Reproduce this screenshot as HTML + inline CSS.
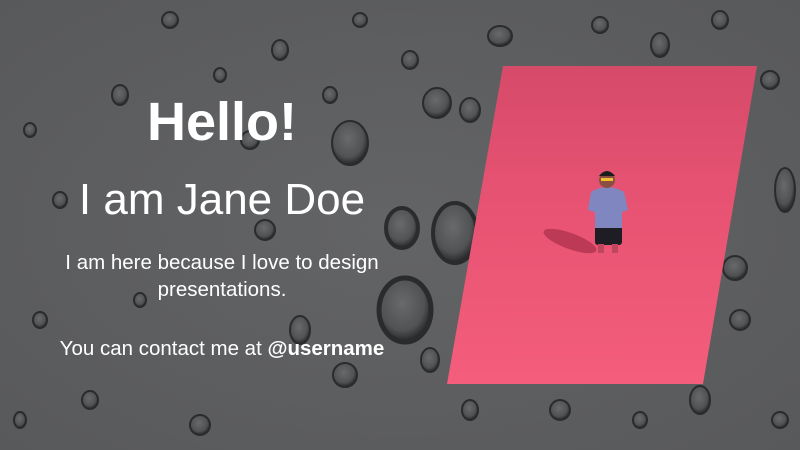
<!DOCTYPE html>
<html><head><meta charset="utf-8"><style>
html,body{margin:0;padding:0}
body{width:800px;height:450px;overflow:hidden;position:relative;background:#5e5f61;font-family:"Liberation Sans",sans-serif;color:#fff}
.t{position:absolute;left:0;width:444px;text-align:center;white-space:nowrap}
</style></head><body>
<svg width="800" height="450" style="position:absolute;left:0;top:0">
<defs>
<radialGradient id="bg" cx="50%" cy="50%" r="70%"><stop offset="0" stop-color="#636466"/><stop offset="1" stop-color="#58595b"/></radialGradient>
<linearGradient id="pk" x1="0" y1="0" x2="0" y2="1"><stop offset="0" stop-color="#d64a6a"/><stop offset="0.5" stop-color="#ea5474"/><stop offset="1" stop-color="#f45e7c"/></linearGradient>
<radialGradient id="dr" cx="45%" cy="40%" r="60%"><stop offset="0" stop-color="#6a6b6d"/><stop offset="0.7" stop-color="#505153"/><stop offset="1" stop-color="#1e1f21"/></radialGradient>
</defs>
<rect width="800" height="450" fill="url(#bg)"/>
<g fill="url(#dr)" stroke="#252628" stroke-width="2" opacity="0.9">
<ellipse cx="437" cy="103" rx="14" ry="15"/><ellipse cx="350" cy="143" rx="18" ry="22"/>
<ellipse cx="402" cy="228" rx="16" ry="20" stroke-width="4"/><ellipse cx="455" cy="233" rx="22" ry="30" stroke-width="4"/>
<ellipse cx="405" cy="310" rx="26" ry="32" stroke-width="5"/><ellipse cx="500" cy="36" rx="12" ry="10"/>
<ellipse cx="470" cy="110" rx="10" ry="12"/><ellipse cx="785" cy="190" rx="10" ry="22"/>
<ellipse cx="740" cy="320" rx="10" ry="10"/><ellipse cx="735" cy="268" rx="12" ry="12"/>
<ellipse cx="700" cy="400" rx="10" ry="14"/><ellipse cx="265" cy="230" rx="10" ry="10"/>
<ellipse cx="345" cy="375" rx="12" ry="12"/><ellipse cx="300" cy="330" rx="10" ry="14"/>
<ellipse cx="200" cy="425" rx="10" ry="10"/><ellipse cx="120" cy="95" rx="8" ry="10"/>
<ellipse cx="60" cy="200" rx="7" ry="8"/><ellipse cx="40" cy="320" rx="7" ry="8"/>
<ellipse cx="660" cy="45" rx="9" ry="12"/><ellipse cx="600" cy="25" rx="8" ry="8"/>
<ellipse cx="770" cy="80" rx="9" ry="9"/><ellipse cx="560" cy="410" rx="10" ry="10"/>
<ellipse cx="250" cy="140" rx="9" ry="9"/><ellipse cx="170" cy="20" rx="8" ry="8"/>
<ellipse cx="280" cy="50" rx="8" ry="10"/><ellipse cx="90" cy="400" rx="8" ry="9"/>
<ellipse cx="430" cy="360" rx="9" ry="12"/><ellipse cx="780" cy="420" rx="8" ry="8"/>
<ellipse cx="330" cy="95" rx="7" ry="8"/><ellipse cx="220" cy="75" rx="6" ry="7"/>
<ellipse cx="30" cy="130" rx="6" ry="7"/><ellipse cx="140" cy="300" rx="6" ry="7"/>
<ellipse cx="20" cy="420" rx="6" ry="8"/><ellipse cx="470" cy="410" rx="8" ry="10"/>
<ellipse cx="640" cy="420" rx="7" ry="8"/><ellipse cx="360" cy="20" rx="7" ry="7"/>
<ellipse cx="410" cy="60" rx="8" ry="9"/><ellipse cx="720" cy="20" rx="8" ry="9"/>
</g>
<polygon points="503,66 757,66 703,384 447,384" fill="url(#pk)"/>
<ellipse cx="570" cy="241" rx="28" ry="8" fill="#b2334f" opacity="0.8" transform="rotate(20 570 241)"/>
<rect x="595" y="225" width="27" height="20" rx="3" fill="#1e1d24"/>
<rect x="598" y="244" width="6" height="9" fill="#c0455f"/><rect x="612" y="244" width="6" height="9" fill="#c0455f"/>
<path d="M591 192 Q607 182 624 192 L628 210 L622 212 L622 228 L595 228 L595 212 L588 210 Z" fill="#7f86c0"/>
<circle cx="607" cy="180" r="8" fill="#8a4f42"/>
<path d="M599 176 Q607 166 615 176 Z" fill="#1c1c1c"/>
<rect x="601" y="178" width="12" height="3" fill="#f0c030"/>
</svg>
<div class="t" style="top:92px;font-size:54px;font-weight:bold;line-height:60px">Hello!</div>
<div class="t" style="top:175px;font-size:44px;line-height:50px">I am Jane Doe</div>
<div class="t" style="top:249px;font-size:20.5px;line-height:27px">I am here because I love to design<br>presentations.</div>
<div class="t" style="top:335px;font-size:20.5px;line-height:27px">You can contact me at <b>@username</b></div>
</body></html>
